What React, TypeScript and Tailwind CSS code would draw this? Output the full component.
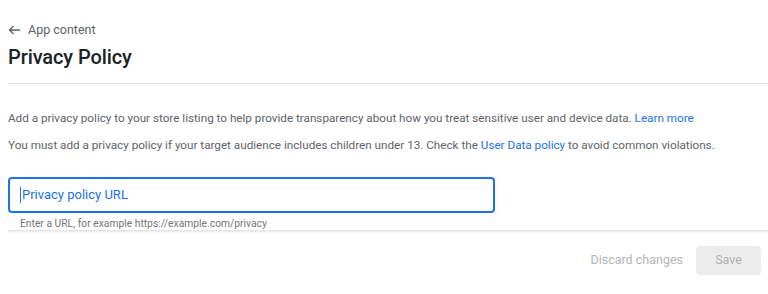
export default function App() {
  return (
    <div className="w-[768px] h-[294px] bg-white overflow-hidden font-['Roboto',sans-serif] text-[#3c4043]">
      <div className="pl-[8px]">
        {/* Header */}
        <div className="pt-[22px] flex items-center gap-[8px] text-[#5f6368]">
          <svg width="12" height="10" viewBox="0 0 12 10" fill="none" stroke="currentColor" strokeWidth="1.3">
            <path d="M12 5H1.5M5.5 1L1.5 5l4 4" />
          </svg>
          <span className="text-[12.5px] leading-[16px]">App content</span>
        </div>
        <h1 className="mt-[7px] text-[20px] leading-[24px] font-medium text-[#202124] tracking-[-0.1px]">
          Privacy Policy
        </h1>
        <div className="mt-[14px] h-px bg-[#e3e3e3]" />

        {/* Description */}
        <p className="mt-[26px] text-[11.7px] leading-[16px] text-[#5f6368]">
          Add a privacy policy to your store listing to help provide transparency about how you treat sensitive user and device data.{" "}
          <a href="#" className="text-[#1a73e8]">Learn more</a>
        </p>
        <p className="mt-[11px] text-[11.7px] leading-[16px] text-[#5f6368]">
          You must add a privacy policy if your target audience includes children under 13. Check the{" "}
          <a href="#" className="text-[#1a73e8]">User Data policy</a> to avoid common violations.
        </p>

        {/* Input */}
        <div className="mt-[24px] w-[487px] h-[36px] border-2 border-[#1a73e8] rounded-[4px] flex items-center px-[10px]">
          <span className="w-px h-[16px] bg-[#1a73e8] mr-px" />
          <span className="text-[13px] text-[#1a73e8]">Privacy policy URL</span>
        </div>
        <div className="pl-[12px] mt-[5px] text-[10.3px] leading-[12px] text-[#757575]">
          Enter a URL, for example https://example.com/privacy
        </div>
        <div className="h-[3px] bg-gradient-to-b from-[#dedede] to-white" />
      </div>

      {/* Actions */}
      <div className="mt-[13px] flex justify-end items-center gap-[13px] pr-[7px]">
        <span className="text-[12.5px] text-[#b5b5b5]">Discard changes</span>
        <div className="w-[65px] h-[29px] rounded-[4px] bg-[#ececec] flex items-center justify-center text-[12.5px] text-[#b0b0b0]">
          Save
        </div>
      </div>
    </div>
  );
}
